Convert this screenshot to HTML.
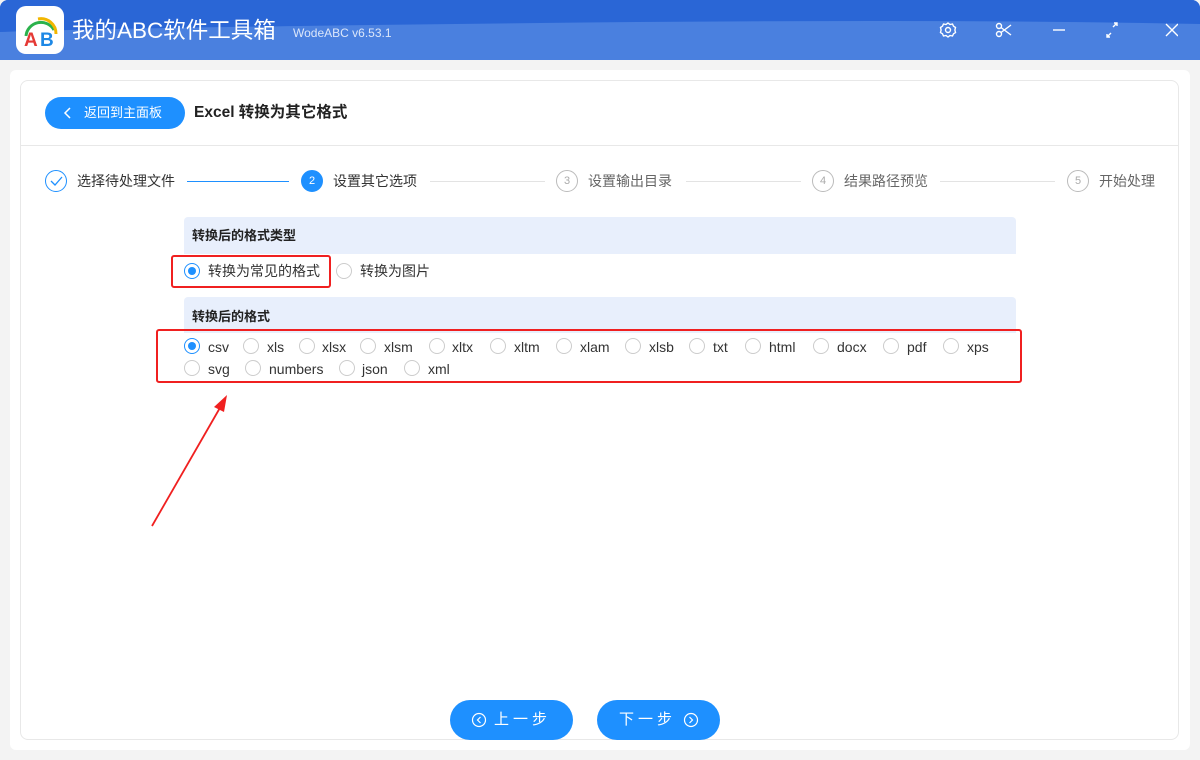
<!DOCTYPE html><html><head><meta charset="utf-8"><style>
*{margin:0;padding:0;box-sizing:border-box}
body{width:1200px;height:760px;background:#f3f3f3;font-family:"Liberation Sans","Noto Sans CJK SC",sans-serif;position:relative;overflow:hidden;font-size:13px;color:#333}
.a{position:absolute}
.top{left:0;top:0;width:1200px;height:60px;background:#4a80df;border-radius:8px 8px 0 0;overflow:hidden}
.r{position:absolute;width:16px;height:16px;border:1px solid #ccc;border-radius:50%;background:#fff}
.r.on{border-color:#1e90ff}
.r.on:after{content:"";position:absolute;left:3px;top:3px;width:8px;height:8px;border-radius:50%;background:#1e90ff}
.t{position:absolute;font-size:14px;color:#333;line-height:16px}
.sc{position:absolute;width:22px;height:22px;border-radius:50%;border:1px solid #bbb;color:#aaa;font-size:11px;text-align:center;line-height:20px}
.st{position:absolute;font-size:14px;line-height:16px}
.ln{position:absolute;height:1px;background:#e3e3e3}
.hd{position:absolute;left:184px;width:832px;background:#e8effc;font-weight:bold;font-size:13px;padding-left:8px;color:#222}
.btn{position:absolute;top:700px;height:40px;width:123px;border-radius:20px;background:#1e90ff;color:#fff;font-size:15px;text-align:center;line-height:40px;letter-spacing:4px}
</style></head><body>
<div class="a top"><svg width="1200" height="60" style="position:absolute;left:0;top:0"><path d="M0 0H1200V24C900 18 600 22 300 26 150 28 50 30 0 32Z" fill="#2a66d6"/></svg></div>
<div class="a" style="left:16px;top:6px;width:48px;height:48px;background:#fff;border-radius:10px"></div>
<svg class="a" style="left:16px;top:6px" width="48" height="48"><path d="M10 30 A15 15 0 0 1 38 24" stroke="#2bb24c" stroke-width="3" fill="none"/><path d="M22 13 A15 15 0 0 1 40 28" stroke="#f2b600" stroke-width="3" fill="none"/><text x="8" y="40" font-size="19" font-weight="bold" fill="#e53935" font-family="Liberation Sans">A</text><text x="24" y="40" font-size="19" font-weight="bold" fill="#1e88e5" font-family="Liberation Sans">B</text></svg>
<div class="a" style="left:72px;top:16px;font-size:22.5px;color:#fff;line-height:30px">我的ABC软件工具箱</div>
<div class="a" style="left:293px;top:26px;font-size:12px;color:#dbe6fa">WodeABC v6.53.1</div>
<svg class="a" style="left:938px;top:20px" width="240" height="20" fill="none" stroke="#fff" stroke-width="1.4"><circle cx="10" cy="10" r="2.5"/><path d="M10 3l2 1.5 2.5-.5 1 2.2 2 1.3-.6 2.5.6 2.5-2 1.3-1 2.2-2.5-.5L10 17l-2-1.5-2.5.5-1-2.2-2-1.3.6-2.5-.6-2.5 2-1.3 1-2.2 2.5.5z"/><circle cx="61" cy="6" r="2.5"/><circle cx="61" cy="14" r="2.5"/><path d="M63 7.5L73 15M63 12.5L73 5"/><path d="M115 10h12"/><path d="M169 17l4-4M169 14v3h3M179 3l-4 4M176 3h3v3"/><path d="M228 4l12 12M240 4l-12 12"/></svg>
<div class="a" style="left:10px;top:70px;width:1180px;height:680px;background:#fff;border-radius:6px"></div>
<div class="a" style="left:20px;top:80px;width:1159px;height:660px;border:1px solid #e8e8e8;border-radius:8px"></div>
<div class="a" style="left:21px;top:145px;width:1157px;height:1px;background:#e8e8e8"></div>
<div class="a" style="left:45px;top:97px;width:140px;height:32px;border-radius:16px;background:#1e90ff;color:#fff;font-size:13px;line-height:32px;padding-left:39px">返回到主面板</div>
<svg class="a" style="left:63px;top:106px" width="10" height="14"><path d="M7 2L2 7l5 5" stroke="#fff" stroke-width="1.5" fill="none"/></svg>
<div class="a" style="left:194px;top:103px;font-size:15.5px;font-weight:bold;color:#222;line-height:20px">Excel 转换为其它格式</div>
<div class="sc" style="left:45px;top:170px;border-color:#1e90ff"></div>
<svg class="a" style="left:49px;top:175px" width="14" height="12"><path d="M2 6l4 4 7-8" stroke="#1e90ff" stroke-width="1.3" fill="none"/></svg>
<div class="st" style="left:77px;top:173px">选择待处理文件</div>
<div class="ln" style="left:187px;top:181px;width:102px;background:#1e90ff"></div>
<div class="sc" style="left:301px;top:170px;background:#1e90ff;border-color:#1e90ff;color:#fff">2</div>
<div class="st" style="left:333px;top:173px">设置其它选项</div>
<div class="ln" style="left:430px;top:181px;width:115px"></div>
<div class="sc" style="left:556px;top:170px">3</div>
<div class="st" style="left:588px;top:173px;color:#666">设置输出目录</div>
<div class="ln" style="left:686px;top:181px;width:115px"></div>
<div class="sc" style="left:812px;top:170px">4</div>
<div class="st" style="left:844px;top:173px;color:#666">结果路径预览</div>
<div class="ln" style="left:940px;top:181px;width:115px"></div>
<div class="sc" style="left:1067px;top:170px">5</div>
<div class="st" style="left:1099px;top:173px;color:#666">开始处理</div>
<div class="hd" style="top:217px;height:37px;line-height:38px;border-radius:4px 4px 0 0">转换后的格式类型</div>
<div class="r on" style="left:184px;top:263px"></div><div class="t" style="left:208px;top:263px">转换为常见的格式</div>
<div class="r" style="left:336px;top:263px"></div><div class="t" style="left:360px;top:263px">转换为图片</div>
<div class="a" style="left:171px;top:255px;width:160px;height:33px;border:2px solid #f02020;border-radius:3px"></div>
<div class="hd" style="top:297px;height:36px;line-height:40px;border-radius:4px 4px 0 0">转换后的格式</div>
<div class="r on" style="left:184px;top:338px"></div><div class="t" style="left:208px;top:339px">csv</div>
<div class="r" style="left:243px;top:338px"></div><div class="t" style="left:267px;top:339px">xls</div>
<div class="r" style="left:299px;top:338px"></div><div class="t" style="left:322px;top:339px">xlsx</div>
<div class="r" style="left:360px;top:338px"></div><div class="t" style="left:384px;top:339px">xlsm</div>
<div class="r" style="left:429px;top:338px"></div><div class="t" style="left:452px;top:339px">xltx</div>
<div class="r" style="left:490px;top:338px"></div><div class="t" style="left:514px;top:339px">xltm</div>
<div class="r" style="left:556px;top:338px"></div><div class="t" style="left:580px;top:339px">xlam</div>
<div class="r" style="left:625px;top:338px"></div><div class="t" style="left:649px;top:339px">xlsb</div>
<div class="r" style="left:689px;top:338px"></div><div class="t" style="left:713px;top:339px">txt</div>
<div class="r" style="left:745px;top:338px"></div><div class="t" style="left:769px;top:339px">html</div>
<div class="r" style="left:813px;top:338px"></div><div class="t" style="left:837px;top:339px">docx</div>
<div class="r" style="left:883px;top:338px"></div><div class="t" style="left:907px;top:339px">pdf</div>
<div class="r" style="left:943px;top:338px"></div><div class="t" style="left:967px;top:339px">xps</div>
<div class="r" style="left:184px;top:360px"></div><div class="t" style="left:208px;top:361px">svg</div>
<div class="r" style="left:245px;top:360px"></div><div class="t" style="left:269px;top:361px">numbers</div>
<div class="r" style="left:339px;top:360px"></div><div class="t" style="left:362px;top:361px">json</div>
<div class="r" style="left:404px;top:360px"></div><div class="t" style="left:428px;top:361px">xml</div>
<div class="a" style="left:156px;top:329px;width:866px;height:54px;border:2.5px solid #f02020;border-radius:3px"></div>
<svg class="a" style="left:0;top:0" width="300" height="560"><path d="M152 526L221 406" stroke="#f02020" stroke-width="1.8"/><path d="M227 395L214 407 224 412z" fill="#f02020"/></svg>
<div class="btn" style="left:450px;padding-left:22px">上一步</div>
<svg class="a" style="left:471px;top:712px" width="16" height="16"><circle cx="8" cy="8" r="6.5" stroke="#fff" stroke-width="1.2" fill="none"/><path d="M9.5 5L6.5 8l3 3" stroke="#fff" stroke-width="1.2" fill="none"/></svg>
<div class="btn" style="left:597px;padding-right:22px">下一步</div>
<svg class="a" style="left:683px;top:712px" width="16" height="16"><circle cx="8" cy="8" r="6.5" stroke="#fff" stroke-width="1.2" fill="none"/><path d="M6.5 5l3 3-3 3" stroke="#fff" stroke-width="1.2" fill="none"/></svg>
</body></html>
